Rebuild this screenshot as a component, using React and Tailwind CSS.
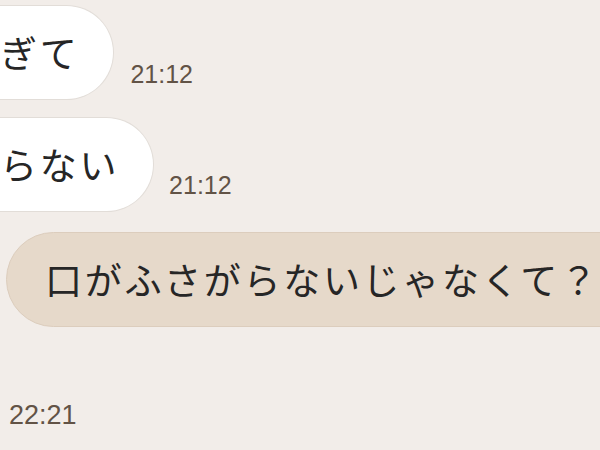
export default function App() {
  return (
    <div className="w-[600px] h-[450px] overflow-hidden bg-[#f2ede9]">
      <div className="flex flex-col pt-[5px]">
        <div className="flex items-end">
          <div className="h-[95px] flex items-center bg-white border border-l-0 border-[#e2ddd8] rounded-r-full pl-0 pr-[34px] text-[37px] leading-none tracking-[2.7px] text-[#262626] whitespace-nowrap font-['Noto_Sans_CJK_JP','Noto_Sans',sans-serif]">
            ぎて
          </div>
          <div className="ml-[16px] mb-[13px] text-[25px] leading-none text-[#625346] font-['Liberation_Sans',Arial,sans-serif]">
            21:12
          </div>
        </div>
        <div className="flex items-end mt-[17px]">
          <div className="h-[95px] flex items-center bg-white border border-l-0 border-[#e2ddd8] rounded-r-full pl-0 pr-[34px] text-[37px] leading-none tracking-[2.7px] text-[#262626] whitespace-nowrap font-['Noto_Sans_CJK_JP','Noto_Sans',sans-serif]">
            らない
          </div>
          <div className="ml-[15px] mb-[14px] text-[25px] leading-none text-[#625346] font-['Liberation_Sans',Arial,sans-serif]">
            21:12
          </div>
        </div>
        <div className="flex mt-[20px] ml-[6px]">
          <div className="h-[95px] flex items-center shrink-0 bg-[#e6d9ca] border border-[#dccdbd] rounded-l-full pl-[38px] pr-[40px] text-[37px] leading-none tracking-[2.7px] text-[#262626] whitespace-nowrap font-['Noto_Sans_CJK_JP','Noto_Sans',sans-serif]">
            口がふさがらないじゃなくて？
          </div>
        </div>
        <div className="mt-[75px] ml-[9px] text-[27px] leading-none text-[#625346] font-['Liberation_Sans',Arial,sans-serif]">
          22:21
        </div>
      </div>
    </div>
  );
}
